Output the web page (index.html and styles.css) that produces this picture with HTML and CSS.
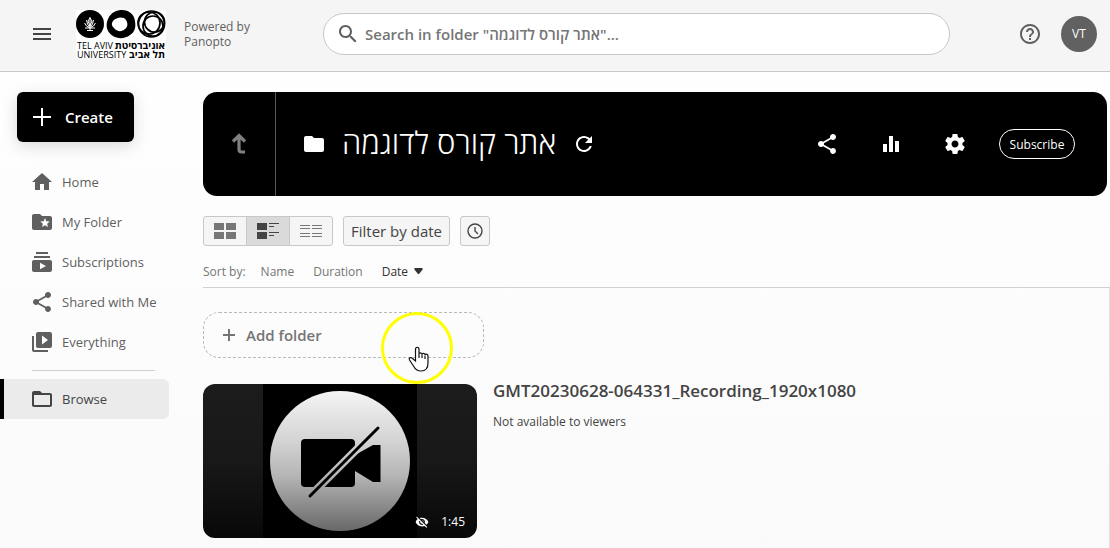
FILE: index.html
```html
<!doctype html>
<html lang="en">
	<head>
		<meta charset="UTF-8" />
		<meta name="viewport" content="width=device-width, initial-scale=1.0" />
		<title>אתר קורס לדוגמה - Panopto</title>
		<link rel="stylesheet" href="styles.css">
	</head>
	<body>
		<!-- The share shape is used in the sidebar and in the banner -->
		<svg class="sprite" aria-hidden="true">
			<symbol id="share" viewBox="0 0 24 24">
				<path d="M18 16.08c-.76 0-1.44.3-1.96.77L8.91 12.7c.05-.23.09-.46.09-.7s-.04-.47-.09-.7l7.05-4.11c.54.5 1.25.81 2.04.81 1.66 0 3-1.34 3-3s-1.34-3-3-3-3 1.34-3 3c0 .24.04.47.09.7L8.04 9.81C7.5 9.31 6.79 9 6 9c-1.66 0-3 1.34-3 3s1.34 3 3 3c.79 0 1.5-.31 2.04-.81l7.12 4.16c-.05.21-.08.43-.08.65 0 1.61 1.31 2.92 2.92 2.92s2.92-1.31 2.92-2.92-1.31-2.92-2.92-2.92z" />
			</symbol>
		</svg>

		<header class="header">
			<button type="button" class="icon-button menu" aria-label="Menu">
				<svg class="icon" viewBox="0 0 24 24"><path d="M3 18h18v-2H3v2zm0-5h18v-2H3v2zm0-7v2h18V6H3z" /></svg>
			</button>
			<a href="#" class="logo" aria-label="Tel Aviv University">
				<svg width="90" height="48" viewBox="0 0 90 48">
					<rect width="90" height="48" fill="#fff" />
					<circle cx="14" cy="14" r="14" />
					<g fill="none" stroke="#fff" stroke-width="1">
						<path d="M14 7v14M14 8l-2 3 2 5 2-5zM10.500 10l1 4 2.500 4 2.500-4 1-4M8.500 13l2 3 3.500 2 3.500-2 2-3M9 18h10M11 20.500h6" />
					</g>
					<path fill-rule="evenodd" d="M32 9C35 2 41 0 46 0c7 0 12 4 13 11 1 6 0 11-5 14-5 4-12 4-17 1-6-4-8-10-5-17zM37 11c-2 3-1 5 1 7 3 4 8 4 11 1 3-2 3-6 1-9-2-4-10-3-13 1z" />
					<g fill="none" stroke="#000" stroke-width="1.700">
						<circle cx="75.500" cy="14" r="13" />
						<circle cx="73" cy="13" r="11" />
						<circle cx="78.500" cy="12" r="10" />
						<circle cx="77" cy="16" r="10" />
					</g>
					<g class="logo-text">
						<text x="1" y="39">TEL AVIV</text>
						<text x="1" y="48">UNIVERSITY</text>
						<text x="89" y="39" class="logo-hebrew">אוניברסיטת</text>
						<text x="89" y="48" class="logo-hebrew">תל אביב</text>
					</g>
				</svg>
			</a>
			<p class="powered">Powered by Panopto</p>

			<label class="search">
				<svg class="icon" viewBox="0 0 24 24" aria-hidden="true"><path d="M15.500 14h-.79l-.28-.27C15.410 12.590 16 11.110 16 9.500 16 5.910 13.090 3 9.500 3S3 5.910 3 9.500 5.910 16 9.500 16c1.610 0 3.090-.59 4.230-1.570l.27.28v.79l5 4.990L20.490 19l-4.990-5zm-6 0C7.010 14 5 11.990 5 9.500S7.010 5 9.500 5 14 7.010 14 9.500 11.990 14 9.500 14z" /></svg>
				<input type="text" class="search-input" aria-label="Search" placeholder='Search in folder "אתר קורס לדוגמה"...' />
			</label>

			<button type="button" class="icon-button" aria-label="Help">
				<svg class="icon" viewBox="0 0 24 24"><path d="M11 18h2v-2h-2v2zm1-16C6.480 2 2 6.480 2 12s4.480 10 10 10 10-4.480 10-10S17.520 2 12 2zm0 18c-4.410 0-8-3.590-8-8s3.590-8 8-8 8 3.590 8 8-3.590 8-8 8zm0-14c-2.210 0-4 1.790-4 4h2c0-1.100.9-2 2-2s2 .9 2 2c0 2-3 1.750-3 5h2c0-2.250 3-2.500 3-5 0-2.210-1.790-4-4-4z" /></svg>
			</button>
			<button type="button" class="avatar">VT</button>
		</header>

		<div class="page">
			<aside class="sidebar">
				<button type="button" class="create">
					<svg class="icon" viewBox="0 0 24 24"><path d="M3 11h8V3h2v8h8v2h-8v8h-2v-8H3z" /></svg>
					Create
				</button>
				<nav class="nav">
					<a href="#" class="nav-link">
						<svg class="icon" viewBox="0 0 24 24"><path d="M10 20v-6h4v6h5v-8h3L12 3 2 12h3v8z" /></svg>
						Home
					</a>
					<a href="#" class="nav-link">
						<svg class="icon" viewBox="0 0 24 24"><path d="M20 6h-8l-2-2H4c-1.100 0-1.990.9-1.990 2L2 18c0 1.100.9 2 2 2h16c1.100 0 2-.9 2-2V8c0-1.100-.9-2-2-2zm-2.060 11L15 15.280 12.060 17l.78-3.330-2.590-2.240 3.410-.29L15 8l1.340 3.140 3.410.29-2.590 2.240.78 3.330z" /></svg>
						My Folder
					</a>
					<a href="#" class="nav-link">
						<svg class="icon" viewBox="0 0 24 24"><path d="M20 8H4V6h16v2zm-2-6H6v2h12V2zm4 10v8c0 1.100-.9 2-2 2H4c-1.100 0-2-.9-2-2v-8c0-1.100.9-2 2-2h16c1.100 0 2 .9 2 2zm-6 4l-6-3.270v6.530L16 16z" /></svg>
						Subscriptions
					</a>
					<a href="#" class="nav-link">
						<svg class="icon"><use href="#share" /></svg>
						Shared with Me
					</a>
					<a href="#" class="nav-link">
						<svg class="icon" viewBox="0 0 24 24"><path d="M4 6H2v14c0 1.100.9 2 2 2h14v-2H4V6zm16-4H8c-1.100 0-2 .9-2 2v12c0 1.100.9 2 2 2h12c1.100 0 2-.9 2-2V4c0-1.100-.9-2-2-2zm-8 12.500v-9l6 4.500-6 4.500z" /></svg>
						Everything
					</a>
					<hr class="nav-divider" />
					<a href="#" class="nav-link active">
						<svg class="icon" viewBox="0 0 24 24"><path d="M20 6h-8l-2-2H4c-1.100 0-1.990.9-1.990 2L2 18c0 1.100.9 2 2 2h16c1.100 0 2-.9 2-2V8c0-1.100-.9-2-2-2zm0 12H4V8h16v10z" /></svg>
						Browse
					</a>
				</nav>
			</aside>

			<main class="content">
				<section class="banner">
					<button type="button" class="banner-up" aria-label="Parent folder">
						<svg class="icon" viewBox="0 0 24 24"><path d="M12 4v13.500q0 2.500 2.500 2.500H18M6 9.500L12 3.500l6 6" fill="none" stroke="currentColor" stroke-width="3.200" /></svg>
					</button>
					<div class="banner-title">
						<svg class="icon" viewBox="0 0 24 24"><path d="M10 4H4c-1.100 0-1.990.9-1.990 2L2 18c0 1.100.9 2 2 2h16c1.100 0 2-.9 2-2V8c0-1.100-.9-2-2-2h-8l-2-2z" /></svg>
						<h1>אתר קורס לדוגמה</h1>
						<button type="button" class="icon-button" aria-label="Refresh">
							<svg class="icon" viewBox="0 0 24 24"><path d="M17.650 6.350C16.200 4.900 14.210 4 12 4c-4.420 0-7.990 3.580-7.990 8s3.570 8 7.990 8c3.730 0 6.840-2.550 7.730-6h-2.080c-.82 2.330-3.040 4-5.650 4-3.310 0-6-2.690-6-6s2.690-6 6-6c1.660 0 3.140.69 4.220 1.780L13 11h7V4l-2.350 2.350z" /></svg>
						</button>
					</div>
					<div class="banner-actions">
						<button type="button" class="icon-button" aria-label="Share">
							<svg class="icon"><use href="#share" /></svg>
						</button>
						<button type="button" class="icon-button" aria-label="Stats">
							<svg class="icon" viewBox="0 0 24 24"><path d="M10 20h4V4h-4v16zm-6 0h4v-8H4v8zM16 9v11h4V9h-4z" /></svg>
						</button>
						<button type="button" class="icon-button" aria-label="Settings">
							<svg class="icon" viewBox="0 0 24 24"><path d="M19.430 12.980c.04-.32.07-.64.07-.98s-.03-.66-.07-.98l2.110-1.650c.19-.15.24-.42.12-.64l-2-3.460c-.12-.22-.39-.3-.61-.22l-2.490 1c-.52-.4-1.080-.73-1.690-.98l-.38-2.650C14.460 2.180 14.250 2 14 2h-4c-.25 0-.46.18-.49.42l-.38 2.650c-.61.25-1.170.59-1.690.98l-2.490-1c-.23-.09-.49 0-.61.22l-2 3.460c-.13.22-.07.49.12.64l2.110 1.650c-.04.32-.07.65-.07.98s.03.66.07.98l-2.110 1.650c-.19.15-.24.42-.12.64l2 3.460c.12.22.39.3.61.22l2.490-1c.52.4 1.080.73 1.690.98l.38 2.650c.03.24.24.42.49.42h4c.25 0 .46-.18.49-.42l.38-2.650c.61-.25 1.170-.59 1.690-.98l2.490 1c.23.09.49 0 .61-.22l2-3.460c.12-.22.07-.49-.12-.64l-2.110-1.650zM12 15.500c-1.930 0-3.500-1.570-3.500-3.500s1.570-3.500 3.500-3.500 3.500 1.570 3.500 3.500-1.570 3.500-3.500 3.500z" /></svg>
						</button>
						<button type="button" class="subscribe">Subscribe</button>
					</div>
				</section>

				<div class="toolbar">
					<div class="views">
						<button type="button" class="view" aria-label="Grid view">
							<svg width="22" height="16"><path d="M0 0h10v7H0zM12 0h10v7H12zM0 9h10v7H0zM12 9h10v7H12z" /></svg>
						</button>
						<button type="button" class="view selected" aria-label="Detail view">
							<svg width="22" height="16"><path d="M0 0h10v7H0zM0 9h10v7H0zM12 0h10v1H12zM12 3h5v1H12zM12 9h10v1H12zM12 12h5v1H12z" /></svg>
						</button>
						<button type="button" class="view" aria-label="List view">
							<svg width="22" height="12"><path d="M0 0h10v1H0zM12 0h10v1H12zM0 3h10v1H0zM12 3h10v1H12zM0 8h10v1H0zM12 8h10v1H12zM0 11h10v1H0zM12 11h10v1H12z" /></svg>
						</button>
					</div>
					<button type="button" class="tool filter">Filter by date</button>
					<button type="button" class="tool clock" aria-label="History">
						<svg width="16" height="16" viewBox="0 0 16 16"><path d="M8 4v4l3 3M15 8A7 7 0 1 1 1 8a7 7 0 1 1 14 0z" fill="none" stroke="currentColor" stroke-width="1.400" /></svg>
					</button>
				</div>

				<div class="sort">
					<span>Sort by:</span>
					<a href="#">Name</a>
					<a href="#">Duration</a>
					<a href="#" class="current">Date
						<svg width="9" height="7"><path d="M1 0h7l1 1-4 5h-1L0 1z" /></svg>
					</a>
				</div>

				<div class="list">
					<div class="add-row">
						<button type="button" class="add-folder">
							<svg width="12" height="12"><path d="M5 0h2v5h5v2H7v5H5V7H0V5h5z" /></svg>
							Add folder
						</button>
						<!-- Click highlight that floats over the list -->
						<svg class="pointer" width="74" height="74" viewBox="0 0 74 74" aria-hidden="true">
							<circle cx="37" cy="37" r="34.500" fill="none" stroke="#ff0" stroke-width="3" />
							<path d="M35.500 50V38.500c0-3 3.500-3 3.500 0V43c0-1.500 3-1.500 3 .5 0-1.500 3-1.500 3 .5 0-1.500 3-1 3 1v7c0 5-2 8-7 8-4 0-6-2-7.500-5l-4-6c-1-2 1-3.500 3-1.500z" fill="#fff" stroke="#111" stroke-width="1.200" />
							<path d="M39 43v4M42 43.500V47M45 44.500V48" stroke="#111" stroke-width="1.200" />
						</svg>
					</div>

					<article class="video">
						<a href="#" class="thumb" aria-label="Play GMT20230628-064331_Recording_1920x1080">
							<svg width="154" height="154" viewBox="0 0 154 154">
								<defs>
									<linearGradient id="shade" gradientUnits="userSpaceOnUse" x1="0" y1="7" x2="0" y2="147">
										<stop offset="0" stop-color="#f4f4f4" />
										<stop offset=".35" stop-color="#d4d4d4" />
										<stop offset=".6" stop-color="#b6b6b6" />
										<stop offset="1" stop-color="#686868" />
									</linearGradient>
								</defs>
								<rect width="154" height="154" />
								<circle cx="77" cy="77" r="70" fill="url(#shade)" />
								<rect x="38" y="55" width="54" height="48" rx="4" />
								<path d="M92 71l18-10h7.500v37H110L92 87z" />
								<path d="M47 112l68-68" stroke="url(#shade)" stroke-width="8" />
								<path d="M47 112l68-68" stroke="#000" stroke-width="3" stroke-linecap="round" />
							</svg>
							<span class="thumb-info">
								<svg width="14" height="14" viewBox="0 0 24 24"><path d="M12 7c2.760 0 5 2.240 5 5 0 .65-.13 1.260-.36 1.830l2.920 2.920c1.510-1.260 2.700-2.890 3.430-4.750-1.730-4.390-6-7.500-11-7.500-1.400 0-2.740.25-3.980.7l2.160 2.160C10.740 7.130 11.350 7 12 7zM2 4.270l2.280 2.280.46.46C3.080 8.300 1.780 10.020 1 12c1.730 4.390 6 7.500 11 7.500 1.550 0 3.030-.3 4.380-.84l.42.42L19.730 22 21 20.730 3.270 3 2 4.270zM7.530 9.800l1.550 1.550c-.05.21-.08.43-.08.65 0 1.660 1.340 3 3 3 .22 0 .44-.03.65-.08l1.550 1.550c-.67.33-1.410.53-2.200.53-2.760 0-5-2.240-5-5 0-.79.2-1.530.53-2.200zm4.310-.78l3.150 3.150.02-.16c0-1.660-1.340-3-3-3l-.17.01z" /></svg>
								1:45
							</span>
						</a>
						<div class="video-text">
							<h2>GMT20230628-064331_Recording_1920x1080</h2>
							<p>Not available to viewers</p>
						</div>
					</article>
				</div>
			</main>
		</div>
	</body>
</html>
```
FILE: styles.css
```css
* {
	box-sizing: border-box;
}

body {
	margin: 0;
	min-height: 100vh;
	display: flex;
	flex-direction: column;
	font-family: "Open Sans", "Noto Sans", "DejaVu Sans", sans-serif;
	font-size: 13px;
	color: #5f5f5f;
	background: linear-gradient(#fff, #fafafa);
}

h1,
h2,
p {
	margin: 0;
}

a {
	color: inherit;
	text-decoration: none;
}

button {
	padding: 0;
	border: 0;
	background: none;
	color: inherit;
	font: inherit;
	cursor: pointer;
}

svg {
	display: block;
	flex: none;
	fill: currentColor;
}

.sprite {
	position: absolute;
	width: 0;
	height: 0;
}

.icon {
	width: 24px;
	height: 24px;
}

/* Header */

.header {
	display: flex;
	align-items: center;
	height: 72px;
	padding: 0 13px 4px 30px;
	background: #f5f5f5;
	border-bottom: 1px solid #c8c8c8;
}

.menu {
	color: #444;
}

.logo {
	margin: 0 18px 0 22px;
	color: #000;
}

.logo svg {
	overflow: visible;
}

.logo-text {
	font-size: 9px;
}

.logo-hebrew {
	direction: rtl;
	font-size: 10px;
	font-weight: 700;
}

.powered {
	width: 72px;
	font-size: 12px;
	line-height: 15px;
}

.search {
	display: flex;
	flex: 1;
	align-items: center;
	gap: 5px;
	height: 42px;
	margin: 0 68px 0 67px;
	padding: 0 12px;
	border: 1px solid #c8c8c8;
	border-radius: 21px;
	background: #fff;
}

.search-input {
	flex: 1;
	min-width: 0;
	padding: 0;
	border: 0;
	outline: 0;
	background: none;
	font: 600 15px "Open Sans", "Noto Sans", "DejaVu Sans", sans-serif;
}

.search-input::placeholder {
	color: #757575;
	opacity: 1;
}

.avatar {
	width: 36px;
	height: 36px;
	margin-left: 19px;
	border-radius: 50%;
	background: #616161;
	color: #fff;
	font-size: 12px;
}

/* Sidebar */

.page {
	display: flex;
	flex: 1;
}

.sidebar {
	flex: none;
	width: 203px;
	padding-top: 20px;
}

.create {
	display: flex;
	align-items: center;
	gap: 11px;
	height: 50px;
	margin-left: 17px;
	padding: 0 21px 0 13px;
	border-radius: 6px;
	background: #000;
	color: #fff;
	font-size: 15px;
	font-weight: 600;
	box-shadow: 0 4px 16px rgba(0, 0, 0, 0.15);
}

.nav {
	margin: 20px 34px 0 0;
}

.nav-link {
	display: flex;
	align-items: center;
	gap: 8px;
	height: 40px;
	padding-left: 26px;
	border-left: 4px solid transparent;
	font-size: 13px;
}

.nav-link.active {
	border-left-color: #000;
	border-radius: 0 6px 6px 0;
	background: #ebebeb;
	color: #444;
}

.nav-divider {
	height: 1px;
	margin: 8px 14px 8px 32px;
	border: 0;
	background: #d0d0d0;
}

/* Folder banner */

.content {
	display: flex;
	flex: 1;
	flex-direction: column;
	min-width: 0;
	padding-top: 20px;
}

.banner {
	display: flex;
	height: 104px;
	margin-right: 3px;
	border-radius: 14px;
	background: #000;
	color: #fff;
}

.banner-up {
	display: flex;
	align-items: center;
	justify-content: center;
	width: 73px;
	border-right: 1px solid #555;
	color: #808080;
}

.banner-title {
	display: flex;
	flex: 1;
	align-items: center;
	gap: 16px;
	padding-left: 26px;
}

.banner-title h1 {
	padding-bottom: 4px;
	font-size: 31px;
	font-weight: 300;
	line-height: 40px;
}

.banner-actions {
	display: flex;
	align-items: center;
	gap: 40px;
	padding-right: 32px;
}

.subscribe {
	width: 76px;
	height: 30px;
	margin-left: -8px;
	border: 1px solid #fff;
	border-radius: 15px;
	font-size: 12px;
}

/* Toolbar */

.toolbar {
	display: flex;
	gap: 10px;
	height: 30px;
	margin-top: 20px;
}

.views {
	display: flex;
	border: 1px solid #c8c8c8;
	border-radius: 3px;
	background: #f5f5f5;
	color: #777;
}

.view {
	display: flex;
	align-items: center;
	justify-content: center;
	width: 42px;
}

.view.selected {
	width: 44px;
	border: solid #c8c8c8;
	border-width: 0 1px;
	background: #dadada;
	color: #444;
}

.tool {
	display: flex;
	align-items: center;
	justify-content: center;
	padding: 0 7px;
	border: 1px solid #c8c8c8;
	border-radius: 3px;
	background: #f5f5f5;
	color: #444;
}

.filter {
	font-size: 15px;
}

.clock {
	width: 30px;
}

.sort {
	display: flex;
	align-items: center;
	height: 42px;
	padding-top: 10px;
	gap: 19px;
	border-bottom: 1px solid #d0d0d0;
	font-size: 12px;
	color: #757575;
}

.sort span {
	margin-right: -4px;
}

.sort .current {
	display: flex;
	align-items: center;
	gap: 6px;
	color: #333;
}

/* Content list */

.list {
	flex: 1;
	padding: 24px 0 10px;
	border-right: 1px solid #e0e0e0;
}

.add-row {
	position: relative;
	width: 281px;
}

.add-folder {
	display: flex;
	align-items: center;
	gap: 11px;
	width: 100%;
	height: 46px;
	padding-left: 19px;
	border: 1px dashed #b8b8b8;
	border-radius: 16px;
	color: #757575;
	font-size: 15px;
	font-weight: 600;
}

.pointer {
	position: absolute;
	top: -1px;
	left: 177px;
	pointer-events: none;
}

.video {
	display: flex;
	gap: 16px;
	margin-top: 26px;
}

.thumb {
	position: relative;
	display: flex;
	flex: none;
	justify-content: center;
	width: 274px;
	height: 154px;
	border-radius: 12px;
	overflow: hidden;
	background: linear-gradient(#1c1c1c, #181818 50%, #080808);
	color: #000;
}

.thumb-info {
	position: absolute;
	right: 12px;
	bottom: 8px;
	display: flex;
	align-items: center;
	gap: 12px;
	color: #fff;
	font-size: 12px;
	line-height: 17px;
}

.video-text {
	min-width: 0;
	color: #444;
}

.video-text h2 {
	margin-bottom: 16px;
	font-size: 17px;
	font-weight: 600;
	line-height: 14px;
}

.video-text p {
	font-size: 12px;
	line-height: 16px;
}
```
